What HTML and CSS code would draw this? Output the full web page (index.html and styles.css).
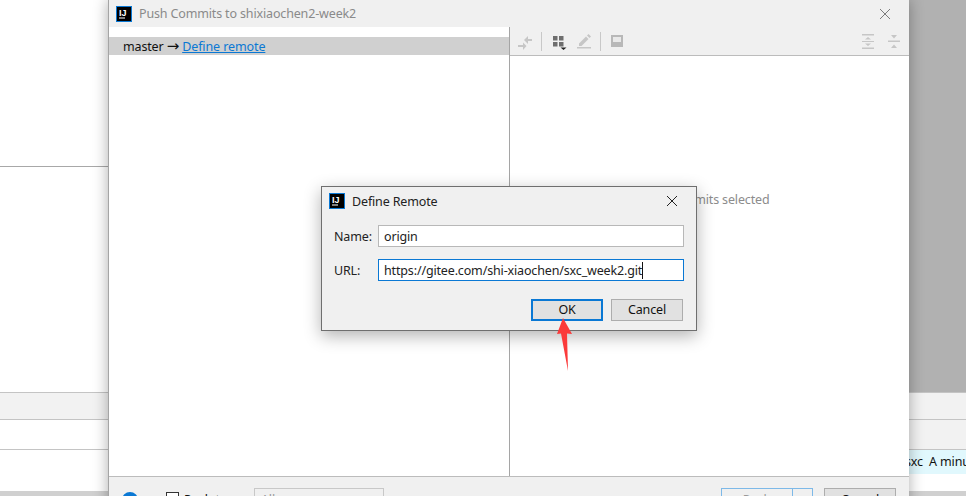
FILE: index.html
```html
<!DOCTYPE html>
<html lang="en">
<head>
<meta charset="utf-8">
<title>Define Remote</title>
<link rel="stylesheet" href="styles.css">
</head>
<body>
<div class="ide">
  <div class="ide-top">
    <div class="ide-editor"><div class="ide-rule"></div></div>
    <div class="ide-dim"></div>
  </div>
  <div class="ide-row ide-row-tabs"></div>
  <div class="ide-row ide-row-split"><div class="ide-fill"></div><div class="ide-side"></div></div>
  <div class="ide-row ide-row-log"><div class="ide-fill"></div><div class="ide-commit">sxc&nbsp; A minute ago</div></div>
  <div class="ide-bottom"></div>
</div>

<section class="push">
  <header class="titlebar">
    <svg class="logo" viewBox="0 0 16 16"><rect x=".5" y=".5" width="15" height="15" fill="#000" stroke="#0a78d4"/><text x="3" y="9.500" class="logo-text">IJ</text><rect x="3" y="11.500" width="6" height="1" fill="#fff"/></svg>
    <span class="title-dim">Push Commits to shixiaochen2-week2</span>
    <svg class="close close-dim" viewBox="0 0 10 10"><path d="M0 0L10 10M10 0L0 10"/></svg>
  </header>
  <div class="panes">
    <div class="pane-left">
      <div class="branch-row">master <span class="arrow-glyph">→</span> <a class="link">Define remote</a></div>
    </div>
    <div class="pane-right">
      <div class="toolbar">
        <svg class="tool tool-merge" viewBox="0 0 17 17"><path d="M6 7l4-4v3h4v2h-4v3zM8.500 13l-3.500-3.500V12H0v2h5v3z" fill="#c6c6c6"/></svg>
        <span class="tool-sep"></span>
        <svg class="tool tool-group" viewBox="0 0 15 15"><path d="M0 1h4.500v4.500H0zM6 1h4.500v4.500H6zM0 7h4.500v4.500H0zM6 7h4.500v4.500H6z" fill="#6e6e6e"/><path d="M7.500 12.500h6l-3 2.500z" fill="#222"/></svg>
        <svg class="tool tool-edit" viewBox="0 0 15 15"><path d="M0 13h14v1.500H0zM2 9.500L9 2.500l2.500 2.500-7 7H2zM10 1.500L11.500 0 14 2.500 12.500 4z" fill="#c6c6c6"/></svg>
        <span class="tool-sep tool-sep-tight"></span>
        <svg class="tool tool-box" viewBox="0 0 12 12"><rect width="12" height="12" fill="#b8b8b8"/><rect x="2" y="2" width="8" height="5" fill="#e9e9e9"/></svg>
        <span class="tool-spacer"></span>
        <svg class="tool tool-exp" viewBox="0 0 12 15"><path d="M0 0h12v1.500H0zM0 13.500h12V15H0zM0 7h12v1H0zM3 5.500L6 3l3 2.500zM3 9.500l3 2.500 3-2.500z" fill="#c6c6c6"/></svg>
        <svg class="tool tool-col" viewBox="0 0 12 15"><path d="M0 6.500h12V8H0zM3 1l3 3.500L9 1zM3 14l3-3.500L9 14z" fill="#c6c6c6"/></svg>
      </div>
      <div class="empty">No commits selected</div>
    </div>
  </div>
  <footer class="footer">
    <span class="help">?</span>
    <span class="check"></span>
    <span class="check-label">Push tags:</span>
    <span class="select">All</span>
    <span class="footer-spacer"></span>
    <span class="split"><span class="split-main">Push</span><span class="split-drop"></span></span>
    <span class="btn-cancel">Cancel</span>
  </footer>
</section>

<section class="modal">
  <header class="modal-title">
    <svg class="logo" viewBox="0 0 16 16"><rect x=".5" y=".5" width="15" height="15" fill="#000" stroke="#0a78d4"/><text x="3" y="9.500" class="logo-text">IJ</text><rect x="3" y="11.500" width="6" height="1" fill="#fff"/></svg>
    <span class="modal-name">Define Remote</span>
    <svg class="close close-dark" viewBox="0 0 10 10"><path d="M0 0L10 10M10 0L0 10"/></svg>
  </header>
  <div class="form">
    <label class="form-label">Name:</label>
    <div class="field">origin</div>
    <label class="form-label">URL:</label>
    <div class="field field-focus"><span class="caret">https://gitee.com/shi-xiaochen/sxc_week2.git</span></div>
  </div>
  <div class="modal-actions">
    <span class="btn btn-ok">OK</span>
    <span class="btn">Cancel</span>
  </div>
</section>

<svg class="pointer" viewBox="0 0 20 56"><path d="M8 0L17 16 12 15.500 13 53 6 15.500 2 16z" fill="#fb3a3a"/></svg>
</body>
</html>
```

FILE: styles.css
```css
* { box-sizing: border-box; }
html, body { margin: 0; height: 496px; overflow: hidden; background: #fff; }
body { position: relative; width: 966px; font: 12.5px/18px "Noto Sans", "Open Sans", sans-serif; letter-spacing: -.15px; color: #1c1c1c; }

.ide { display: flex; flex-direction: column; height: 496px; }
.ide-top { display: flex; height: 392px; }
.ide-editor { flex: 1; padding-top: 166px; }
.ide-rule { height: 1px; background: #a8a8a8; }
.ide-dim { width: 57px; background: #b1b1b1; }
.ide-row { display: flex; border-top: 1px solid #c4c4c4; }
.ide-row-tabs { height: 27px; background: #f2f2f2; }
.ide-row-split { height: 30px; }
.ide-row-log { height: 42px; align-items: flex-start; }
.ide-fill { flex: 1; }
.ide-side { width: 57px; background: #f2f2f2; }
.ide-commit { width: 76px; height: 24px; padding-left: 15px; background: #e1f8fd; line-height: 24px; white-space: nowrap; overflow: hidden; color: #111; }
.ide-bottom { flex: 1; background: #d0d0d0; }

.push { position: absolute; left: 108px; top: 0; width: 801px; height: 530px; display: flex; flex-direction: column; background: #f0f0f0; border-left: 1px solid #a5a5a5; box-shadow: 0 0 14px rgba(0,0,0,.32); }
.titlebar { display: flex; align-items: center; height: 27px; padding: 0 19px 0 7px; flex: none; }
.logo { width: 16px; height: 16px; flex: none; display: block; }
.logo-text { font: 700 9px "Liberation Sans", sans-serif; letter-spacing: 0; fill: #fff; }
.title-dim { margin-left: 7px; color: #8a8a8a; }
.close { width: 10px; height: 10px; margin-left: auto; fill: none; stroke-width: 1; }
.close-dim { stroke: #7c7c7c; }
.close-dark { stroke: #222; }

.panes { display: flex; height: 450px; flex: none; background: #fff; border-bottom: 1px solid #bcbcbc; }
.pane-left { width: 401px; padding-top: 10px; border-right: 1px solid #a5a5a5; }
.branch-row { height: 18px; padding-left: 14px; background: #d0d0d0; color: #111; line-height: 20px; white-space: nowrap; }
.arrow-glyph { font-family: "DejaVu Sans", sans-serif; font-size: 15px; line-height: 1; }
.link { color: #0a78d4; text-decoration: underline; letter-spacing: -.1px; }
.pane-right { flex: 1; display: flex; flex-direction: column; }
.toolbar { display: flex; align-items: center; height: 29px; padding: 0 9px 0 8px; background: #f0f0f0; border-bottom: 1px solid #bcbcbc; flex: none; }
.tool { display: block; flex: none; }
.tool-merge { width: 17px; height: 17px; }
.tool-sep { width: 1px; height: 19px; margin: 0 11px 0 6px; background: #c8c8c8; }
.tool-sep-tight { margin: 0 10px 0 0; }
.tool-group { width: 15px; height: 15px; margin: 3px 0 0 0; }
.tool-edit { width: 15px; height: 15px; margin: 0 8px 0 9px; }
.tool-box { width: 12px; height: 12px; }
.tool-spacer { flex: 1; }
.tool-exp { width: 12px; height: 15px; }
.tool-col { width: 12px; height: 15px; margin-left: 14px; }
.empty { padding-top: 135px; text-align: center; color: #8c8c8c; }

.footer { flex: 1; display: flex; align-items: flex-start; padding: 11px 13px 0 13px; }
.help { width: 16px; height: 16px; margin-top: 4px; border-radius: 50%; background: #0a78d4; color: #fff; font-size: 11px; font-weight: 700; line-height: 16px; text-align: center; }
.check { width: 13px; height: 13px; margin: 4px 0 0 28px; border: 1px solid #333; background: #fff; }
.check-label { margin: 3px 0 0 5px; width: 70px; color: #111; }
.select { width: 130px; height: 24px; padding: 2px 0 0 6px; border: 1px solid #c8c8c8; color: #999; }
.footer-spacer { flex: 1; }
.split { display: flex; width: 92px; height: 24px; border: 1px solid #7db9e8; }
.split-main { flex: 1; padding-top: 2px; text-align: center; border-right: 1px solid #7db9e8; color: #9a9a9a; }
.split-drop { width: 19px; }
.btn-cancel { width: 72px; height: 24px; margin-left: 11px; padding-top: 2px; text-align: center; border: 1px solid #adadad; background: #e1e1e1; color: #111; }

.modal { position: absolute; left: 321px; top: 186px; width: 376px; height: 145px; padding: 0 12px; background: #f0f0f0; border: 1px solid #6f6f6f; box-shadow: 0 5px 16px rgba(0,0,0,.3); }
.modal-title { display: flex; align-items: center; height: 28px; margin: 0 -12px; padding: 0 19px 0 7px; }
.modal-name { margin: 2px 0 0 7px; color: #222; }
.form { display: grid; grid-template-columns: 44px 306px; row-gap: 12px; margin-top: 10px; }
.form-label { height: 22px; line-height: 24px; color: #222; }
.field { height: 22px; padding: 0 5px; line-height: 22px; background: #fff; border: 1px solid #b8b8b8; color: #222; white-space: nowrap; }
.field-focus { border-color: #0a78d4; }
.caret { border-right: 1px solid #111; }
.modal-actions { display: flex; justify-content: flex-end; gap: 8px; margin: 18px 1px 0 0; }
.btn { width: 72px; height: 22px; line-height: 19px; text-align: center; background: #e1e1e1; border: 1px solid #adadad; color: #111; }
.btn-ok { border: 2px solid #0a78d4; line-height: 18px; }

.pointer { position: absolute; left: 555px; top: 318px; width: 20px; height: 56px; }
```
